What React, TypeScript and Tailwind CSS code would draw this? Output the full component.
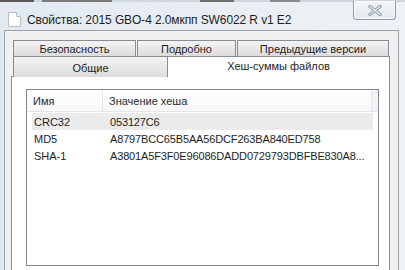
const rows = [
  { name: 'CRC32', value: '053127C6', selected: true },
  { name: 'MD5', value: 'A8797BCC65B5AA56DCF263BA840ED758' },
  { name: 'SHA-1', value: 'A3801A5F3F0E96086DADD0729793DBFBE830A8...' },
];

function FileIcon() {
  return (
    <svg width="13" height="15" viewBox="0 0 13 15">
      <path d="M0.5 0.5 H8.5 L12.5 4.5 V14.5 H0.5 Z" fill="#ffffff" stroke="#b9bec4" />
      <path d="M8.5 0.5 V4.5 H12.5" fill="#eef0f2" stroke="#b9bec4" />
    </svg>
  );
}

function CloseGlyph() {
  return (
    <svg width="14" height="11" viewBox="0 0 14 11">
      <path d="M2 1.5 L12 9.5 M12 1.5 L2 9.5" stroke="#8a949f" strokeWidth="3" strokeLinecap="square" />
      <path d="M2 1.5 L12 9.5 M12 1.5 L2 9.5" stroke="#f4f6f8" strokeWidth="1.2" strokeLinecap="square" />
    </svg>
  );
}

export default function App() {
  return (
    <div className="flex h-[270px] w-[405px] flex-col overflow-hidden bg-gradient-to-r from-[#e2e9f0] to-[#eef2f6] font-['Liberation_Sans',sans-serif] text-[#1e1e1e]">
      {/* bits of the window behind */}
      <div className="flex h-[2px] shrink-0 bg-[#cfd6dd]">
        <div className="w-[34px] bg-[#5a5a5a]" />
        <div className="w-[8px]" />
        <div className="w-[70px] bg-[#7a7a7a]" />
        <div className="w-[88px]" />
        <div className="w-[34px] bg-[#6e6e6e]" />
        <div className="w-[36px]" />
        <div className="w-[30px] bg-[#8a8a8a]" />
      </div>

      {/* title bar */}
      <div className="flex h-[28px] shrink-0 items-start pl-[8px] pr-[9px]">
        <div className="mt-[10px] flex items-center">
          <FileIcon />
          <span className="ml-[6px] text-[12px] leading-[14px] tracking-[-0.1px] text-[#1e1e1e]">
            Свойства: 2015 GBO-4 2.0мкпп SW6022 R v1 E2
          </span>
        </div>
        <div className="ml-auto -mt-[1px] flex h-[19px] w-[43px] items-center justify-center rounded-b-[4px] border border-t-0 border-[#8f9aa6] bg-gradient-to-b from-[#f3f6f9] to-[#e3e9ef] shadow-[inset_0_0_0_1px_#fafcfd]">
          <CloseGlyph />
        </div>
      </div>

      {/* client area */}
      <div className="ml-[4px] mr-[6px] flex flex-1 flex-col border border-b-0 border-[#9da3aa] bg-[#f0f0f0] pl-[6px] pr-[8px] pt-[9px]">
        {/* back tab row */}
        <div className="flex h-[16px] shrink-0 gap-[1px] pl-[2px] text-[11px] leading-[14px]">
          <div className="flex w-[123px] items-center justify-center border border-b-0 border-[#898c95] bg-gradient-to-b from-[#f4f4f4] to-[#dcdcdc]">
            Безопасность
          </div>
          <div className="flex w-[99px] items-center justify-center border border-b-0 border-[#898c95] bg-gradient-to-b from-[#f4f4f4] to-[#dcdcdc]">
            Подробно
          </div>
          <div className="flex w-[152px] items-center justify-center border border-b-0 border-[#898c95] bg-gradient-to-b from-[#f4f4f4] to-[#dcdcdc]">
            Предыдущие версии
          </div>
        </div>

        {/* front tab row */}
        <div className="relative z-10 -mb-[1px] flex h-[21px] shrink-0 pl-[2px] text-[11px] leading-[14px]">
          <div className="flex w-[155px] items-center justify-center border border-b-0 border-[#898c95] bg-gradient-to-b from-[#f4f4f4] to-[#dcdcdc] pt-[1px]">
            Общие
          </div>
          <div className="flex flex-1 items-start justify-center border border-b-0 border-l-0 border-[#898c95] bg-white pt-[2px]">
            Хеш-суммы файлов
          </div>
        </div>

        {/* tab page */}
        <div className="flex flex-1 flex-col border border-b-0 border-[#898c95] bg-white pl-[14px] pr-[10px] pt-[12px]">
          <div className="flex h-[177px] flex-col border border-[#828790] bg-white text-[11px] leading-[14px]">
            <div className="flex h-[22px] shrink-0 border-b border-[#e3e5e8] bg-gradient-to-b from-[#ffffff] to-[#f6f7f8]">
              <div className="flex w-[76px] items-center border-r border-[#e3e5e8] pl-[6px] text-[#2a2a2a]">Имя</div>
              <div className="flex w-[269px] items-center border-r border-[#e3e5e8] pl-[6px] text-[#2a2a2a]">Значение хеша</div>
              <div className="flex-1 bg-[#f3f4f5]" />
            </div>
            <div className="mt-[1px] flex flex-col px-[5px]">
              {rows.map((r) => (
                <div
                  key={r.name}
                  className={`flex h-[17px] items-center ${r.selected ? 'bg-[#ebebeb]' : ''}`}
                >
                  <div className="w-[76px] pl-[2px]">{r.name}</div>
                  <div className="whitespace-nowrap pl-[2px] tracking-[-0.15px]">{r.value}</div>
                </div>
              ))}
            </div>
          </div>
        </div>
      </div>
    </div>
  );
}
